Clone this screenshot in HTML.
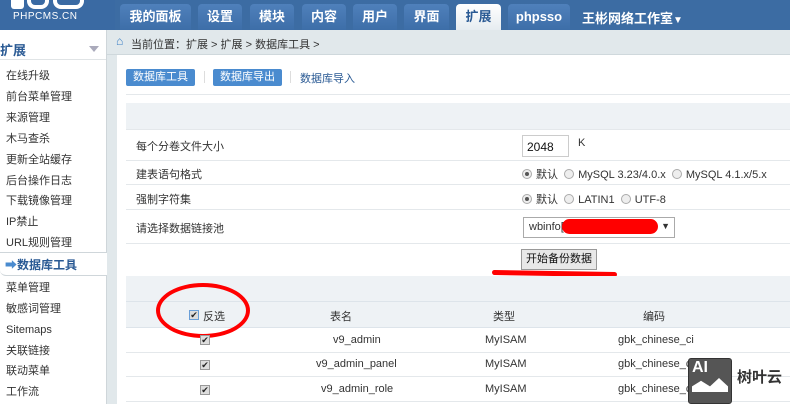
<!DOCTYPE html>
<html><head><meta charset="utf-8"><style>
*{margin:0;padding:0;box-sizing:border-box}
body{width:790px;height:404px;overflow:hidden;background:#fff;font-family:"Liberation Sans","Noto Sans CJK SC",sans-serif;font-size:11px;color:#333;position:relative}
.a{position:absolute}
#hd{left:0;top:0;width:790px;height:30px;background:#3c6ca3}
.tab{position:absolute;top:4px;height:26px;background:linear-gradient(#4f80bb,#3d6ea8);border-radius:4px 4px 0 0;color:#fff;font-weight:bold;font-size:13px;text-align:center;line-height:26px}
.tab.on{background:linear-gradient(#fff,#e6ecf0);color:#2a5a94}
#bc{left:107px;top:30px;width:683px;height:25px;background:#e1e8eb;border-bottom:1px solid #cfd8dc}
#sb{left:0;top:30px;width:107px;height:374px;background:#fff;border-right:1px solid #cfd6da}
.si{position:absolute;left:6px;font-size:11px;color:#333;line-height:16px}
.btn{position:absolute;top:69px;height:17px;background:#4a8bcf;color:#fff;font-size:11px;line-height:17px;text-align:center;border-radius:2px}
.ln{position:absolute;left:126px;width:664px;height:1px;background:#e4e8eb}
.gb{position:absolute;left:126px;width:664px;background:#eef2f5}
.rad{display:inline-block;width:10px;height:10px;border:1px solid #aaa;border-radius:50%;background:#eee;vertical-align:-1px;margin-right:4px;position:relative}
.rad.on::after{content:"";position:absolute;left:2px;top:2px;width:4px;height:4px;border-radius:50%;background:#555}
.cb{position:absolute;width:10px;height:10px;border:1px solid #999;background:#ddd;font-size:9px;line-height:8px;text-align:center;color:#222}
</style></head><body>
<div id="hd" class="a">
 <div class="a" style="left:0;top:0;width:115px;height:30px;background:#3a6aa3"></div>
 <div class="a" style="left:11px;top:0;width:13px;height:9px;background:#fff;border-radius:0 0 3px 3px"></div>
 <div class="a" style="left:27px;top:0;width:22px;height:9px;border:4px solid #fff;border-top:none;border-radius:0 0 8px 8px"></div>
 <div class="a" style="left:53px;top:0;width:31px;height:9px;border:4px solid #fff;border-top:none;border-radius:0 0 8px 8px"></div>
 <div class="a" style="left:13px;top:11px;color:#fff;font-size:10px;letter-spacing:.5px">PHPCMS.CN</div>
 <div class="tab" style="left:120px;width:71px">我的面板</div>
 <div class="tab" style="left:198px;width:44px">设置</div>
 <div class="tab" style="left:250px;width:44px">模块</div>
 <div class="tab" style="left:302px;width:44px">内容</div>
 <div class="tab" style="left:353px;width:44px">用户</div>
 <div class="tab" style="left:404px;width:45px">界面</div>
 <div class="tab on" style="left:456px;width:45px">扩展</div>
 <div class="tab" style="left:508px;width:62px">phpsso</div>
 <div class="a" style="left:582px;top:8px;color:#fff;font-weight:bold;font-size:13px">王彬网络工作室<span style="font-size:10px">▼</span></div>
</div>
<div id="bc" class="a"><span class="a" style="left:9px;top:4px;color:#3a7fc6;font-size:12px">⌂</span><span class="a" style="left:24px;top:6px;font-size:11px">当前位置：扩展 &gt; 扩展 &gt; 数据库工具 &gt;</span></div>
<div class="a" style="left:107px;top:55px;width:10px;height:349px;background:#e1e8eb"></div>
<div id="sb" class="a">
 <div class="a" style="left:0;top:0;width:106px;height:30px;background:#fff;border-bottom:1px solid #e0e4e6"></div>
 <div class="a" style="left:0;top:10px;font-size:13px;font-weight:bold;color:#2a5a94">扩展</div>
 <div class="a" style="left:89px;top:16px;border:5px solid transparent;border-top:6px solid #aab"></div>
 <div class="si" style="top:38px">在线升级</div>
 <div class="si" style="top:59px">前台菜单管理</div>
 <div class="si" style="top:80px">来源管理</div>
 <div class="si" style="top:101px">木马查杀</div>
 <div class="si" style="top:122px">更新全站缓存</div>
 <div class="si" style="top:143px">后台操作日志</div>
 <div class="si" style="top:163px">下载镜像管理</div>
 <div class="si" style="top:184px">IP禁止</div>
 <div class="si" style="top:205px">URL规则管理</div>
 <div class="a" style="left:0;top:222px;width:107px;height:24px;background:#fff;border:1px solid #cfd6da;border-right:none;border-left:none;border-radius:0 0 0 6px"></div>
 <div class="si" style="top:227px;left:5px;font-weight:bold;color:#2a5a94;font-size:12px"><span style="color:#4a8bcf">➡</span>数据库工具</div>
 <div class="si" style="top:250px">菜单管理</div>
 <div class="si" style="top:271px">敏感词管理</div>
 <div class="si" style="top:292px">Sitemaps</div>
 <div class="si" style="top:313px">关联链接</div>
 <div class="si" style="top:333px">联动菜单</div>
 <div class="si" style="top:354px">工作流</div>
</div>
<div class="btn" style="left:126px;width:69px">数据库工具</div>
<div class="a" style="left:204px;top:71px;width:1px;height:12px;background:#ddd"></div>
<div class="btn" style="left:213px;width:69px">数据库导出</div>
<div class="a" style="left:290px;top:71px;width:1px;height:12px;background:#ddd"></div>
<div class="a" style="left:300px;top:70px;color:#2a5a94;font-size:11px">数据库导入</div>
<div class="ln" style="top:94px"></div>
<div class="gb" style="top:103px;height:26px"></div>
<div class="ln" style="top:129px"></div>
<div class="a" style="left:136px;top:138px">每个分卷文件大小</div>
<div class="a" style="left:522px;top:135px;width:47px;height:22px;border:1px solid #ccc;font-size:12px;padding:4px 0 0 4px;color:#111">2048</div>
<div class="a" style="left:578px;top:137px">K</div>
<div class="ln" style="top:160px"></div>
<div class="a" style="left:136px;top:166px">建表语句格式</div>
<div class="a" style="left:522px;top:166px"><span class="rad on"></span>默认 &nbsp;<span class="rad"></span>MySQL 3.23/4.0.x &nbsp;<span class="rad"></span>MySQL 4.1.x/5.x</div>
<div class="ln" style="top:184px"></div>
<div class="a" style="left:136px;top:191px">强制字符集</div>
<div class="a" style="left:522px;top:191px"><span class="rad on"></span>默认 &nbsp;<span class="rad"></span>LATIN1 &nbsp;<span class="rad"></span>UTF-8</div>
<div class="ln" style="top:209px"></div>
<div class="a" style="left:136px;top:220px">请选择数据链接池</div>
<div class="a" style="left:523px;top:217px;width:152px;height:21px;border:1px solid #aaa;padding:3px 0 0 5px">wbinfo[<span class="a" style="right:4px;top:3px;font-size:9px">▼</span></div>
<div class="a" style="left:562px;top:219px;width:96px;height:15px;background:#f00;border-radius:8px"></div>
<div class="ln" style="top:243px"></div>
<div class="a" style="left:521px;top:249px;width:76px;height:21px;background:#e8e8e8;border:1px solid #999;text-align:center;line-height:19px;color:#111">开始备份数据</div>
<div class="a" style="left:492px;top:271px;width:125px;height:5px;background:#f00;border-radius:3px;transform:rotate(1deg)"></div>
<div class="gb" style="top:276px;height:25px"></div>
<div class="gb" style="top:301px;height:27px;background:#eef2f5;border-top:1px solid #dde4ea;border-bottom:1px solid #dde4ea"></div>
<div class="cb" style="left:189px;top:310px;border-color:#6a9fd8">✔</div>
<div class="a" style="left:203px;top:308px">反选</div>
<div class="a" style="left:330px;top:308px">表名</div>
<div class="a" style="left:493px;top:308px">类型</div>
<div class="a" style="left:643px;top:308px">编码</div>
<div class="a" style="left:156px;top:283px;width:94px;height:55px;border:4px solid #f00;border-radius:50%"></div>
<div class="cb" style="left:200px;top:335px">✔</div><div class="a" style="left:333px;top:334px">v9_admin</div><div class="a" style="left:485px;top:334px">MyISAM</div><div class="a" style="left:618px;top:334px">gbk_chinese_ci</div>
<div class="ln" style="top:352px"></div>
<div class="cb" style="left:200px;top:360px">✔</div><div class="a" style="left:316px;top:358px">v9_admin_panel</div><div class="a" style="left:485px;top:358px">MyISAM</div><div class="a" style="left:618px;top:358px">gbk_chinese_ci</div>
<div class="ln" style="top:376px"></div>
<div class="cb" style="left:200px;top:385px">✔</div><div class="a" style="left:321px;top:383px">v9_admin_role</div><div class="a" style="left:485px;top:383px">MyISAM</div><div class="a" style="left:618px;top:383px">gbk_chinese_ci</div>
<div class="ln" style="top:401px"></div>
<div class="a" style="left:688px;top:358px;width:44px;height:46px;background:#555;border-radius:3px;border:1px solid #333"></div>
<div class="a" style="left:692px;top:358px;color:#fff;font-weight:bold;font-size:16px;line-height:20px">AI</div>
<div class="a" style="left:692px;top:378px;width:36px;height:14px;background:#fff;clip-path:polygon(0 100%,0 60%,25% 20%,50% 60%,75% 0,100% 60%,100% 100%)"></div>
<div class="a" style="left:737px;top:366px;font-weight:bold;font-size:15px;color:#333">树叶云</div>
</body></html>
